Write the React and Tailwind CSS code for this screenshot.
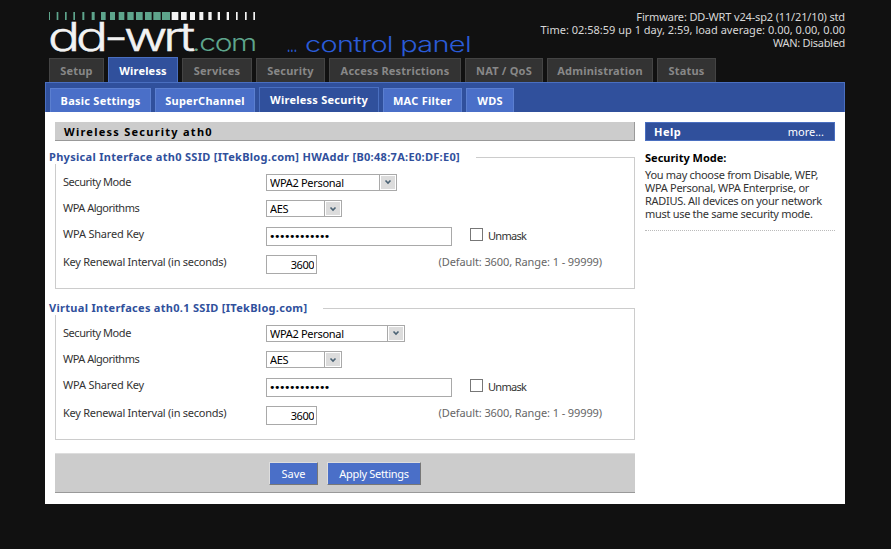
const mainTabs = [
  ["Setup", "w-[55px]"],
  ["Wireless", "w-[70px]", true],
  ["Services", "w-[70px]"],
  ["Security", "w-[69px]"],
  ["Access Restrictions", "w-[132px]"],
  ["NAT / QoS", "w-[78px]"],
  ["Administration", "w-[106px]"],
  ["Status", "w-[59px]"],
];
const subTabs = [
  ["Basic Settings", "w-[101px]"],
  ["SuperChannel", "w-[100px]"],
  ["Wireless Security", "w-[120px]", true],
  ["MAC Filter", "w-[79px]"],
  ["WDS", "w-[48px]"],
];
const tealBars = [[27,3],[50,5],[75,5],[100,5],[127,6],[155,9],[183,14],[210,15],[236,17],[262,19],[288,20],[315,20],[340,22],[366,24]];
const whiteBars = [[395,20],[423,17],[450,15],[478,12],[505,10],[533,7],[560,7],[588,5],[615,5],[640,5]];

function Arrow() {
  return (
    <span className="absolute right-0 top-0 bottom-0 w-[18px] bg-[#dcdcdc] border border-[#a9a9a9] shadow-[inset_0_0_0_1px_#ffffff] flex items-center justify-center pointer-events-none">
      <svg width="8" height="6" viewBox="0 0 8 6">
        <path d="M1.5 1.5 L4 4 L6.5 1.5" fill="none" stroke="#4a6274" strokeWidth="1.6" />
      </svg>
    </span>
  );
}

function Select({ value, w }) {
  return (
    <span className={`relative block h-[17px] ${w}`}>
      <select defaultValue={value} className="appearance-none block w-full h-full border border-[#a9a9a9] bg-white pl-[3px] text-[11px] tracking-[-0.3px] text-black font-['Noto_Sans'] outline-none">
        <option>{value}</option>
      </select>
      <Arrow />
    </span>
  );
}

function Row({ label, h, labelClass, children, after }) {
  return (
    <div className={`flex items-center ${h}`}>
      <span className={`w-[210px] shrink-0 pl-[7px] text-[#333] ${labelClass}`}>{label}</span>
      {children}
      {after}
    </div>
  );
}

function Group({ legend, selectW }) {
  return (
    <fieldset className="border border-[#ccc] mx-[10px] h-[139px] min-w-0 px-0 pt-[5px]">
      <legend className="-ml-[7px] pr-[16px] font-bold text-[#30509c] leading-[14px] tracking-[0.3px]">{legend}</legend>
      <Row label="Security Mode" h="h-[26px]" labelClass="-mt-[1px] tracking-[-0.45px]">
        <Select value="WPA2 Personal" w={selectW} />
      </Row>
      <Row label="WPA Algorithms" h="h-[27px]" labelClass="-mt-[2px] tracking-[-0.5px]">
        <Select value="AES" w="w-[76px]" />
      </Row>
      <Row
        label="WPA Shared Key"
        h="h-[28px]"
        labelClass="-mt-[6px] tracking-[-0.2px]"
        after={
          <label className="flex items-center ml-[18px] text-[#333]">
            <span className="block w-[13px] h-[13px] border border-[#777] bg-white -mt-[4px]" />
            <span className="ml-[5px] -mt-[1px] tracking-[-0.7px]">Unmask</span>
          </label>
        }
      >
        <input type="password" readOnly defaultValue="123456789012" className="block w-[186px] h-[19px] border border-[#a9a9a9] pl-[2px] text-[11px] font-['DejaVu_Sans'] tracking-[-1.5px] outline-none" />
      </Row>
      <Row
        label="Key Renewal Interval (in seconds)"
        h="h-[28px]"
        labelClass="-mt-[6px] tracking-[-0.25px]"
        after={<span className="ml-auto mr-[32px] text-[#666] -mt-[6px] tracking-[-0.1px]">(Default: 3600, Range: 1 - 99999)</span>}
      >
        <input type="text" readOnly defaultValue="3600" className="block w-[51px] h-[19px] border border-[#a9a9a9] pr-[2px] text-right text-[11px] tracking-[-0.5px] text-black font-['Noto_Sans'] outline-none" />
      </Row>
    </fieldset>
  );
}

export default function App() {
  return (
    <div className="min-h-[549px] bg-[#111] overflow-hidden font-['Noto_Sans',sans-serif] text-[11px] leading-[13px]">
      <div className="w-[800px] ml-[45px]">
        <header className="h-[57px] flex justify-between">
          <div className="flex items-end pl-[3px]">
            <svg width="430" height="57" viewBox="0 0 430 57" role="img" aria-label="dd-wrt.com control panel">
              {tealBars.map(([x, w]) => (
                <rect key={x} x={x / 3 - 8} y="12" width={w / 3} height="8" fill="#5ea58c" />
              ))}
              {whiteBars.map(([x, w]) => (
                <rect key={x} x={x / 3 - 8} y="12" width={w / 3} height="8" fill="#f4f4f4" />
              ))}
              <text x="0" y="51" textLength="143" lengthAdjust="spacingAndGlyphs" letterSpacing="-3" fontFamily="Inter" fontWeight="300" fontSize="39" fill="#f2f2f2" stroke="#f2f2f2" strokeWidth="0.5">dd-wrt</text>
              <text x="144" y="51" textLength="64" lengthAdjust="spacingAndGlyphs" letterSpacing="-1" fontFamily="Inter" fontWeight="300" fontSize="23" fill="#5ea58c">.com</text>
              <text x="239" y="52" textLength="10" lengthAdjust="spacingAndGlyphs" fontFamily="Inter" fontWeight="400" fontSize="20" fill="#2a5bd7">...</text>
              <text x="257" y="52" textLength="166" lengthAdjust="spacingAndGlyphs" letterSpacing="-0.5" fontFamily="Inter" fontWeight="300" fontSize="21" fill="#2a5bd7">control panel</text>
            </svg>
          </div>
          <div className="pt-[10px] text-right text-[#d8d8d8]">
            <div className="tracking-[-0.15px]">Firmware: DD-WRT v24-sp2 (11/21/10) std</div>
            <div>Time: 02:58:59 up 1 day, 2:59, load average: 0.00, 0.00, 0.00</div>
            <div className="tracking-[-0.3px]">WAN: Disabled</div>
          </div>
        </header>

        <nav className="flex items-end gap-[4px] pl-[4px] h-[25px]">
          {mainTabs.map(([t, w, active]) => (
            <div
              key={t}
              className={`${w} font-bold text-center flex items-center justify-center tracking-[0.2px] border border-b-0 ${active ? "h-[25px] bg-[#30509c] border-[#4a6fc0] text-white" : "h-[24px] bg-[#333] border-[#444] text-[#888]"}`}
            >
              {t}
            </div>
          ))}
        </nav>

        <div className="h-[30px] bg-[#30509c] border-t border-x border-[#4a6fc0] flex items-end gap-[4px] pl-[4px]">
          {subTabs.map(([t, w, active]) => (
            <div
              key={t}
              className={`${w} font-bold text-white text-center flex items-center justify-center tracking-[0.25px] border border-b-0 ${active ? "h-[25px] bg-[#30509c] border-[#4a6fc0] pb-[1px]" : "h-[24px] bg-[#4a6fc8] border-[#5b7fd0]"}`}
            >
              {t}
            </div>
          ))}
        </div>

        <main className="h-[392px] bg-white flex pt-[10px]">
          <div className="w-[600px] shrink-0">
            <h2 className="mx-[10px] h-[19px] bg-[#ccc] border-b border-r border-[#999] pl-[9px] font-bold text-black tracking-[1.25px] leading-[20px]">
              Wireless Security ath0
            </h2>
            <div className="mt-[9px] flex flex-col gap-[12px]">
              <Group legend="Physical Interface ath0 SSID [ITekBlog.com] HWAddr [B0:48:7A:E0:DF:E0]" selectW="w-[131px]" />
              <Group legend="Virtual Interfaces ath0.1 SSID [ITekBlog.com]" selectW="w-[139px]" />
            </div>
            <div className="mx-[10px] mt-[13px] h-[40px] bg-[#ccc] border-t border-[#ddd] border-b border-b-[#999] flex items-center justify-center gap-[9px]">
              <button className="w-[49px] h-[23px] bg-[#4a6fc8] border border-[#ddd] border-r-[#777] border-b-[#777] text-white">Save</button>
              <button className="w-[94px] h-[23px] bg-[#4a6fc8] border border-[#ddd] border-r-[#777] border-b-[#777] text-white tracking-[-0.3px]">Apply Settings</button>
            </div>
          </div>
          <aside className="w-[190px]">
            <div className="h-[19px] bg-[#30509c] border border-[#4a6fc0] flex items-center justify-between pl-[8px] pr-[10px] text-white">
              <span className="font-bold tracking-[0.5px]">Help</span>
              <span>more...</span>
            </div>
            <h3 className="mt-[10px] font-bold text-black">Security Mode:</h3>
            <p className="mt-[4px] pb-[10px] border-b border-dotted border-[#bbb] text-[#333] tracking-[-0.3px]">
              You may choose from Disable, WEP, WPA Personal, WPA Enterprise, or RADIUS. All devices on your network must use the same security mode.
            </p>
          </aside>
        </main>
      </div>
    </div>
  );
}
